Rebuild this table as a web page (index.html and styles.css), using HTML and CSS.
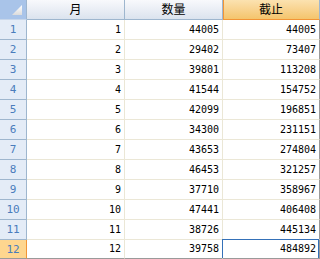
FILE: index.html
```html
<!DOCTYPE html>
<html lang="zh">
<head>
<meta charset="utf-8">
<title>Sheet</title>
<link rel="stylesheet" href="styles.css">
</head>
<body>
<div class="sheet">
  <div class="corner"><span class="tri"></span></div>
  <div class="colhead">月</div>
  <div class="colhead">数量</div>
  <div class="colhead sel">截止</div>

  <div class="rowhead">1</div><div class="cell">1</div><div class="cell">44005</div><div class="cell last">44005</div>
  <div class="rowhead">2</div><div class="cell">2</div><div class="cell">29402</div><div class="cell last">73407</div>
  <div class="rowhead">3</div><div class="cell">3</div><div class="cell">39801</div><div class="cell last">113208</div>
  <div class="rowhead">4</div><div class="cell">4</div><div class="cell">41544</div><div class="cell last">154752</div>
  <div class="rowhead">5</div><div class="cell">5</div><div class="cell">42099</div><div class="cell last">196851</div>
  <div class="rowhead">6</div><div class="cell">6</div><div class="cell">34300</div><div class="cell last">231151</div>
  <div class="rowhead">7</div><div class="cell">7</div><div class="cell">43653</div><div class="cell last">274804</div>
  <div class="rowhead">8</div><div class="cell">8</div><div class="cell">46453</div><div class="cell last">321257</div>
  <div class="rowhead">9</div><div class="cell">9</div><div class="cell">37710</div><div class="cell last">358967</div>
  <div class="rowhead">10</div><div class="cell">10</div><div class="cell">47441</div><div class="cell last">406408</div>
  <div class="rowhead">11</div><div class="cell">11</div><div class="cell">38726</div><div class="cell last">445134</div>
  <div class="rowhead sel bottom">12</div><div class="cell bottom">12</div><div class="cell bottom">39758</div><div class="cell last bottom active">484892</div>
</div>
</body>
</html>
```

FILE: styles.css
```css
html, body {
  margin: 0;
  padding: 0;
  background: #ffffff;
}

.sheet {
  width: 320px;
  height: 259px;
  overflow: hidden;
  display: grid;
  grid-template-columns: 27px 98px 98px 97px;
  grid-template-rows: 20px repeat(11, 20px) 19px;
  font-family: "DejaVu Sans Mono", "Liberation Mono", monospace;
  font-size: 10px;
  color: #000000;
}

.sheet > div {
  box-sizing: border-box;
}

.corner {
  background: #a9c4e9;
  border-right: 1px solid #9eb6ce;
  border-bottom: 1px solid #c7d6ea;
  position: relative;
}

.corner .tri {
  position: absolute;
  left: 12px;
  top: 5px;
  width: 10px;
  height: 10px;
  background: linear-gradient(to bottom, #ffffff, #dcdcdc);
  clip-path: polygon(100% 0, 100% 100%, 0 100%);
}

.colhead {
  display: flex;
  align-items: center;
  justify-content: center;
  font-family: "Noto Sans CJK SC", "Noto Sans", sans-serif;
  font-size: 12px;
  line-height: 1;
  padding-bottom: 1px;
  background: linear-gradient(to bottom, #f8f9fc 0%, #eaeef5 50%, #dbe3ee 100%);
  border-right: 1px solid #9eb6ce;
  border-bottom: 1px solid #9eb6ce;
}

.colhead.sel {
  background: linear-gradient(to bottom, #fbe2b0 0%, #f8d38f 50%, #f4c56c 100%);
  border-bottom: 1px solid #f29536;
  border-right: 1px solid #9eb6ce;
  box-shadow: inset 1px 0 0 #f29536;
}

.rowhead {
  display: flex;
  align-items: center;
  justify-content: center;
  background: #e4ecf7;
  color: #4a7cbc;
  border-right: 1px solid #9eb6ce;
  border-bottom: 1px solid #9eb6ce;
  font-size: 11px;
}

.rowhead.sel {
  background: #fed68f;
  border-right: 1px solid #f29536;
  border-bottom: 1px solid #9a9a9a;
}

.cell {
  display: flex;
  align-items: center;
  justify-content: flex-end;
  padding-right: 3px;
  border-right: 1px solid #ebe7d6;
  border-bottom: 1px solid #ebe7d6;
  padding-bottom: 1px;
}

.cell.last {
  border-right: 1px solid #9a9a9a;
}

.cell.bottom {
  border-bottom: 1px solid #9a9a9a;
}

.cell.active {
  position: relative;
}

.cell.active::after {
  content: "";
  position: absolute;
  left: -1px;
  top: -1px;
  right: 0;
  bottom: 0;
  border: 1px solid #3571b8;
  border-bottom: none;
}
```
